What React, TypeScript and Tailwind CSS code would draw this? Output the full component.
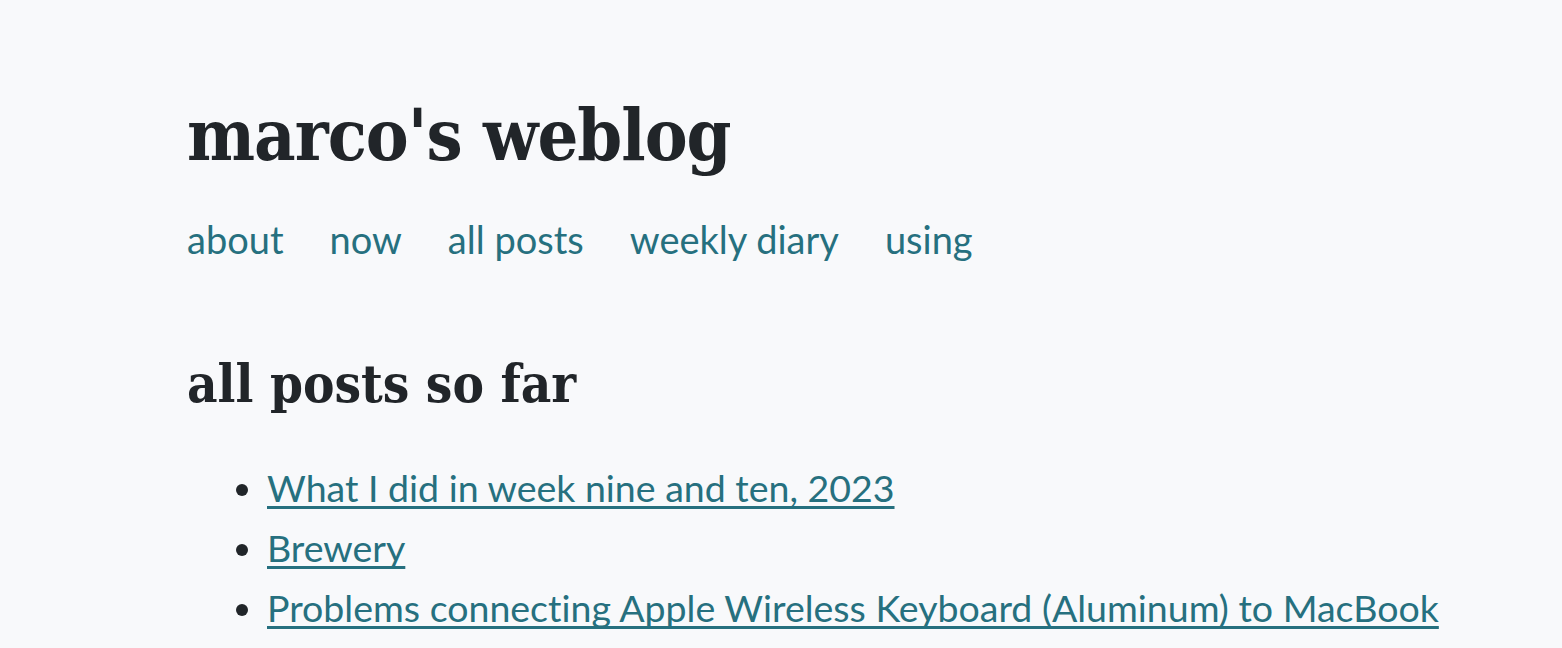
export default function App() {
  const posts = [
    'What I did in week nine and ten, 2023',
    'Brewery',
    'Problems connecting Apple Wireless Keyboard (Aluminum) to MacBook',
  ]
  return (
    <div className="min-h-[648px] bg-[#f8f9fb] font-['Lato',sans-serif] text-[#212529] [font-variant-ligatures:none]">
      <div className="pl-[187px] pt-[90px]">
        <h1 className="font-['DejaVu_Serif_Condensed','DejaVu_Serif',serif] text-[71.5px] font-bold leading-[90px] tracking-[-1px]">
          marco's weblog
        </h1>
        <nav className="mt-[37px] flex gap-[46px] text-[38px] leading-[44px] text-[#26707f]">
          <a href="#">about</a>
          <a href="#">now</a>
          <a href="#">all posts</a>
          <a href="#">weekly diary</a>
          <a href="#">using</a>
        </nav>
        <h2 className="mt-[88px] font-['DejaVu_Serif_Condensed','DejaVu_Serif',serif] text-[52.5px] font-bold leading-[70px]">
          all posts so far
        </h2>
        <ul className="mt-[39px] list-disc pl-[80px] text-[37.5px] leading-[60px] marker:text-[#212529]">
          {posts.map((p) => (
            <li key={p}>
              <a
                href="#"
                className="text-[#26707f] underline decoration-[2.5px] underline-offset-[4px] [text-decoration-skip-ink:none]"
              >
                {p}
              </a>
            </li>
          ))}
        </ul>
      </div>
    </div>
  )
}
